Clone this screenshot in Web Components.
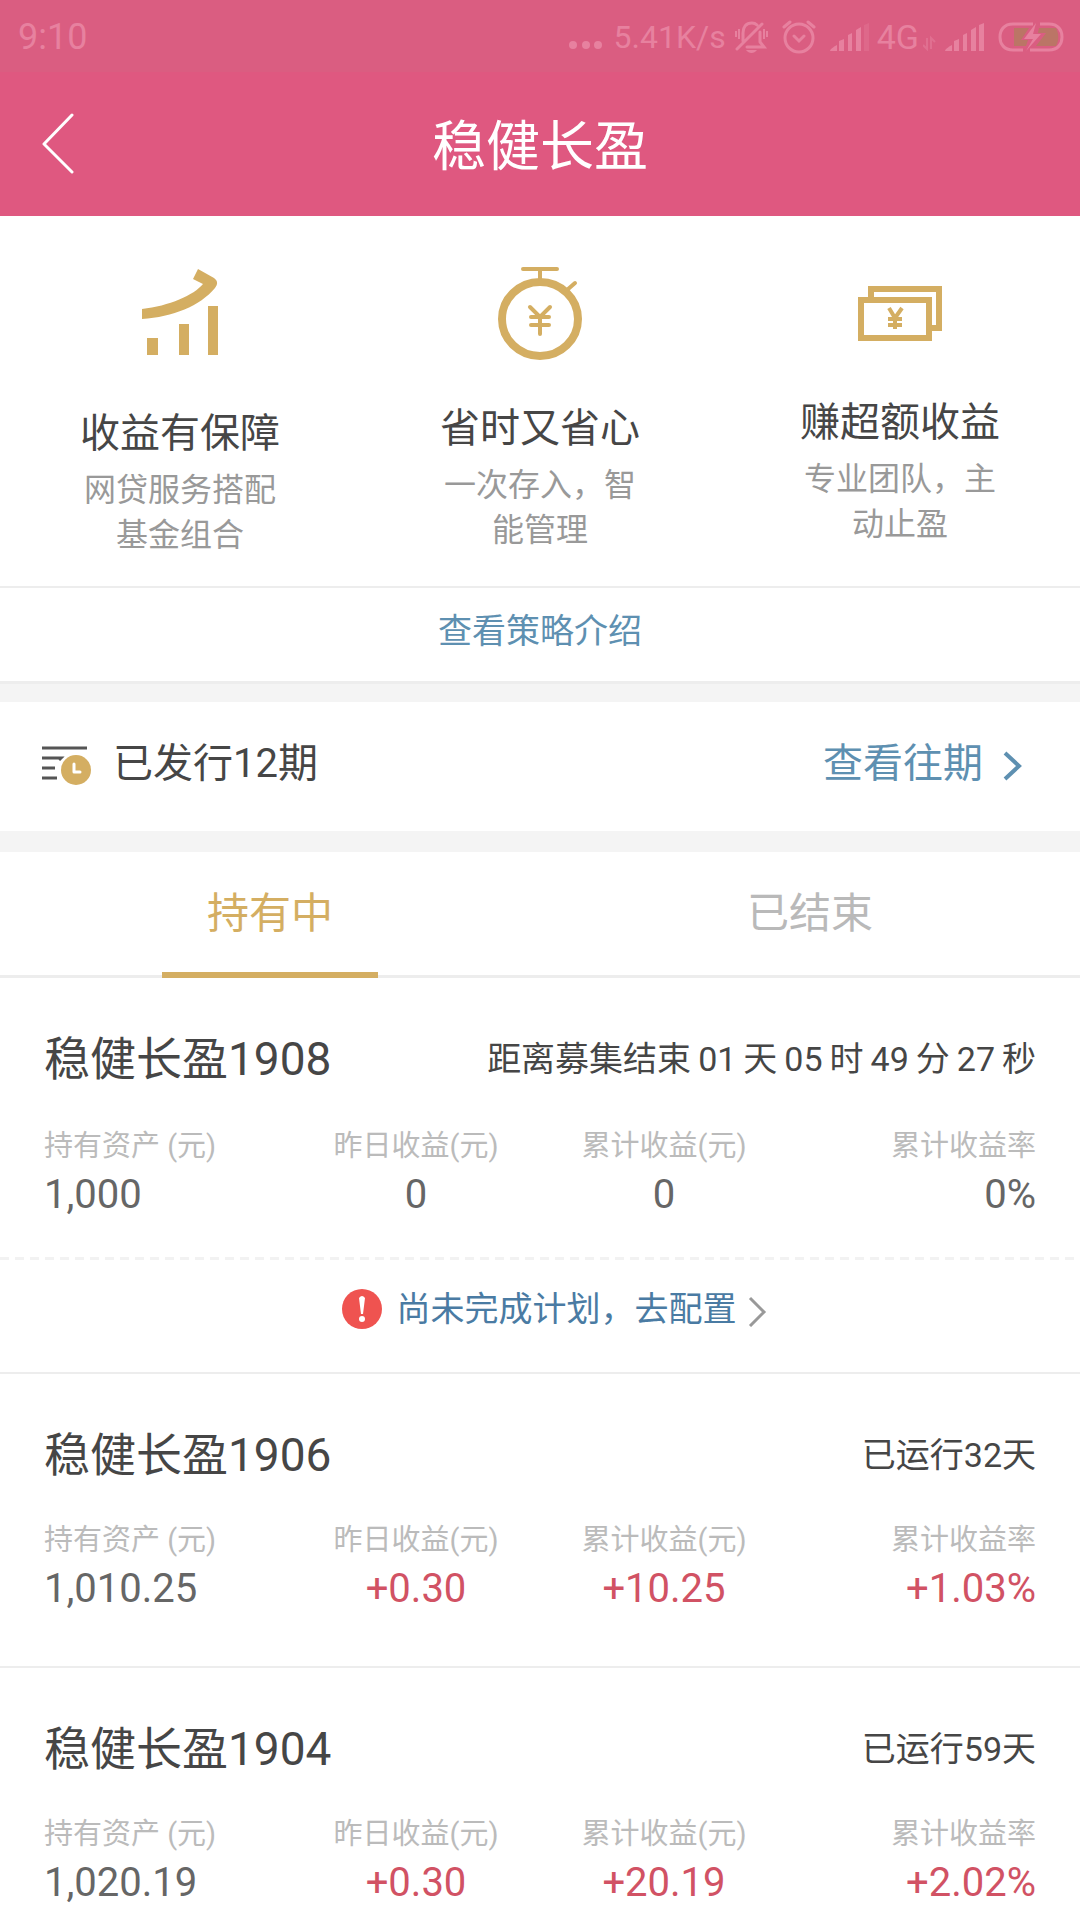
<!DOCTYPE html>
<html lang="zh-CN">
<head>
<meta charset="utf-8">
<meta name="viewport" content="width=device-width, initial-scale=1">
<title>稳健长盈</title>
<style>
  :root {
    --pink: #df5880;
    --gold: #d4ae62;
    --blue: #5e90b1;
    --text: #464646;
    --line: #ededed;
    --band: #f4f4f4;
  }

  body {
    margin: 0;
    height: 100vh;
    display: flex;
    flex-direction: column;
    background: #fff;
    color: var(--text);
    font-family: Roboto, "Noto Sans CJK SC", sans-serif;
    font-size: 34px;
    line-height: 48px;
  }

  main {
    flex: 1;
    min-height: 0;
    overflow-y: auto;
    scrollbar-width: none;
  }
</style>
</head>
<body>
  <status-bar></status-bar>
  <nav-header>稳健长盈</nav-header>

  <main>
    <feature-list>
      <feature-item icon="chart">
        <span slot="title">收益有保障</span>
        网贷服务搭配基金组合
      </feature-item>
      <feature-item icon="timer">
        <span slot="title">省时又省心</span>
        一次存入，智能管理
      </feature-item>
      <feature-item icon="notes">
        <span slot="title">赚超额收益</span>
        专业团队，主动止盈
      </feature-item>
    </feature-list>
    <strategy-link>查看策略介绍</strategy-link>
    <issue-row>
      已发行12期
      <span slot="more">查看往期</span>
    </issue-row>
    <tab-bar></tab-bar>
    <div id="plans"></div>
  </main>

<script>
function makeTemplate(html) {
  const tpl = document.createElement('template');
  tpl.innerHTML = html;
  return tpl;
}

class BaseElement extends HTMLElement {
  constructor() {
    super();
    this.attachShadow({ mode: 'open' }).appendChild(this.constructor.tpl.content.cloneNode(true));
  }
}

class StatusBar extends BaseElement {
  static tpl = makeTemplate(`
    <style>
      :host {
        display: flex;
        align-items: center;
        height: 72px;
        padding: 2px 16px 0 18px;
        box-sizing: border-box;
        background: #da5d81;
        color: #e7819f;
      }

      time { flex: 1; font-size: 36px; }
      svg { display: block; fill: currentColor; }
      .line { fill: none; stroke: currentColor; stroke-width: 3; }
      .thin { stroke-width: 2; }
      .speed { margin: 0 8px 0 12px; font-size: 32px; }
      .alarm { margin: 0 14px; }
      .net { margin: 0 4px 0 8px; }
      .battery { margin-left: 14px; }
    </style>

    <time>9:10</time>
    <svg width="34" height="30"><circle cx="5" cy="23" r="4"/><circle cx="18" cy="23" r="4"/><circle cx="30" cy="23" r="4"/></svg>
    <span class="speed">5.41K/s</span>
    <svg width="34" height="32" viewBox="0 0 34 32">
      <path class="line" stroke-linecap="round" d="M3 28 28 3M9 20V12C9 6 12 2 18 2c3 0 4 1 5 2M13 26h17l-4-5V11"/>
      <path class="line thin" d="M2 10v6M5 8v10M33 10v6M30 8v10"/>
      <path d="M12 29h11c-3 4-8 4-11 0z"/>
    </svg>
    <svg class="alarm" width="34" height="34" viewBox="0 0 34 34">
      <circle class="line" cx="17" cy="18" r="14"/>
      <path class="line" stroke-linecap="round" d="m12 16 5 5 5-5M2 7l6-5M32 7l-6-5"/>
    </svg>
    <svg width="39" height="28" viewBox="0 0 39 28">
      <path d="M0 28c0-2 5-5 7-6v6zM9 18l5-2v12H9zM18 12l4-2v18h-4zM26 7l5-3v24h-5z"/>
      <path opacity=".3" d="m34 2 5-2v28h-5z"/>
    </svg>
    <span class="net">4G</span>
    <svg width="22" height="28" viewBox="0 0 22 28" opacity=".5">
      <path class="line thin" d="M4 15v11L0 22M8 26V15l4 4"/>
    </svg>
    <svg width="39" height="28" viewBox="0 0 39 28">
      <path d="M0 28c0-2 5-5 7-6v6zM9 18l5-2v12H9zM18 12l4-2v18h-4zM26 7l5-3v24h-5zM34 2l5-2v28h-5z"/>
    </svg>
    <svg class="battery" width="66" height="30" viewBox="0 0 66 30">
      <path fill="#bb7566" d="M16 6h15L23 18h7l-2 6H16zM41 6h17c3 5 3 13 0 18H38l10-13h-8z"/>
      <path class="line" d="M35 2H15C6 2 2 8 2 15S6 28 15 28h10M42 2h9c9 0 13 6 13 13S60 28 51 28H32"/>
      <path d="M38 1 26 17h9l-7 12 15-17h-8z"/>
    </svg>
  `);
}

class NavHeader extends BaseElement {
  static tpl = makeTemplate(`
    <style>
      :host {
        display: grid;
        grid-template-columns: 120px 1fr 120px;
        align-items: center;
        height: 144px;
        background: var(--pink);
        color: #fff;
      }

      button {
        width: 116px;
        height: 144px;
        padding: 0;
        border: none;
        background: none;
        color: inherit;
        cursor: pointer;
      }

      svg { display: block; margin: 0 auto; }

      h1 {
        margin: 8px 0 0;
        text-align: center;
        font-size: 54px;
        font-weight: 400;
        line-height: 72px;
      }
    </style>

    <button aria-label="返回">
      <svg width="34" height="62" viewBox="0 0 34 62" fill="none" stroke="currentColor" stroke-width="3" stroke-linecap="round" stroke-linejoin="round"><path d="M31 2 3 31l28 28"/></svg>
    </button>
    <h1><slot></slot></h1>
  `);
}

class FeatureList extends BaseElement {
  static tpl = makeTemplate(`
    <style>
      :host {
        display: grid;
        grid-template-columns: repeat(3, 1fr);
        padding: 40px 0 28px;
        border-bottom: 2px solid var(--line);
      }
    </style>

    <slot></slot>
  `);
}

const featureIcons = {
  chart: `
    <svg width="84" height="124" viewBox="0 0 84 124" fill="#d4ae62">
      <path d="M4 53C31 50 56 39 65 28L55 23l5-10 16 9c4 3 4 6 1 10C62 50 35 61 4 63z"/>
      <path d="M9 82h11v17H9zM41 68h10v31H41zM70 50h10v49H70z"/>
    </svg>`,
  timer: `
    <svg width="84" height="119" viewBox="0 0 84 119" fill="none" stroke="#d4ae62" stroke-width="4" stroke-linecap="round">
      <ellipse cx="42" cy="63" rx="38" ry="37" stroke-width="8"/>
      <path d="M25 13h34M42 13v10M69 34l8-7M32 51l10 10 10-10M42 61v17M33 61h18M33 69h18"/>
    </svg>`,
  notes: `
    <svg width="84" height="113" viewBox="0 0 84 113" fill="none" stroke="#d4ae62" stroke-width="6">
      <path d="M13 42V33h68v39h-8"/>
      <path d="M3 44h68v38H3z"/>
      <path stroke-width="4" d="m31 52 6 10 7-10M37 62v11M30 63h14M30 69h14"/>
    </svg>`
};

class FeatureItem extends BaseElement {
  static tpl = makeTemplate(`
    <style>
      :host {
        display: flex;
        flex-direction: column;
        align-items: center;
      }

      #icon svg { display: block; }

      h2 {
        margin: 30px 0 10px;
        font-size: 40px;
        font-weight: 400;
        line-height: 48px;
      }

      p {
        margin: 0;
        width: 200px;
        color: #999;
        font-size: 32px;
        line-height: 45px;
        text-align: center;
      }
    </style>

    <div id="icon"></div>
    <h2><slot name="title"></slot></h2>
    <p><slot></slot></p>
  `);

  connectedCallback() {
    this.shadowRoot.getElementById('icon').innerHTML = featureIcons[this.getAttribute('icon')];
  }
}

class StrategyLink extends BaseElement {
  static tpl = makeTemplate(`
    <style>
      :host {
        display: block;
        border-bottom: 3px solid var(--line);
      }

      a {
        display: block;
        padding: 19px 0 26px;
        color: var(--blue);
        text-align: center;
        text-decoration: none;
      }
    </style>

    <a href="#strategy"><slot></slot></a>
  `);
}

class IssueRow extends BaseElement {
  static tpl = makeTemplate(`
    <style>
      :host {
        display: flex;
        align-items: center;
        padding: 38px 57px 43px 40px;
        border-top: 18px solid var(--band);
        border-bottom: 21px solid var(--band);
        font-size: 40px;
      }

      svg { display: block; }
      .label { flex: 1; margin-left: 21px; }

      a {
        display: flex;
        align-items: center;
        gap: 18px;
        color: var(--blue);
        text-decoration: none;
      }

      a svg { margin-top: 4px; }
    </style>

    <svg width="52" height="48" viewBox="0 0 52 48">
      <path d="M2 8h45M2 18h19l-2 2M2 28h13M2 38h15" fill="none" stroke="#555" stroke-width="3"/>
      <circle cx="36" cy="30" r="15" fill="#d4ae62"/>
      <path d="M34 24v8h6" fill="none" stroke="#fff" stroke-width="3" stroke-linecap="round" stroke-linejoin="round"/>
    </svg>
    <span class="label"><slot></slot></span>
    <a href="#history">
      <slot name="more"></slot>
      <svg width="22" height="30" viewBox="0 0 22 30" fill="none" stroke="currentColor" stroke-width="4"><path d="m4 2 14 13L4 28"/></svg>
    </a>
  `);
}

class TabBar extends BaseElement {
  static tpl = makeTemplate(`
    <style>
      :host {
        display: grid;
        grid-template-columns: 1fr 1fr;
        box-shadow: inset 0 -3px var(--line);
      }

      button {
        display: flex;
        flex-direction: column;
        align-items: center;
        padding: 38px 0 0;
        border: none;
        background: none;
        color: #b9b9b9;
        font: inherit;
        font-size: 42px;
        cursor: pointer;
      }

      button::after {
        content: '';
        width: 40%;
        height: 6px;
        margin-top: 34px;
      }

      button[aria-selected="true"] { color: var(--gold); }
      button[aria-selected="true"]::after { background: var(--gold); }
    </style>

    <button role="tab" aria-selected="true">持有中</button>
    <button role="tab" aria-selected="false">已结束</button>
  `);

  connectedCallback() {
    this.setAttribute('role', 'tablist');
    const tabs = this.shadowRoot.querySelectorAll('button');
    tabs.forEach(tab => {
      tab.onclick = () => tabs.forEach(t => t.setAttribute('aria-selected', t === tab));
    });
  }
}

class PlanCard extends BaseElement {
  static tpl = makeTemplate(`
    <style>
      :host {
        display: block;
        border-bottom: 2px solid var(--line);
      }

      article { padding: 51px 44px 53px; }
      article.pending { padding-bottom: 38px; }

      header {
        display: flex;
        align-items: center;
        justify-content: space-between;
        height: 60px;
        margin-bottom: 35px;
      }

      .pending header { margin-bottom: 37px; }

      h2 {
        margin: 0;
        font-size: 46px;
        font-weight: 400;
        line-height: 60px;
      }

      #state { display: flex; gap: 7px; }

      dl {
        display: grid;
        grid-template-columns: repeat(4, 1fr);
        margin: 0;
        text-align: center;
      }

      dl div:first-child { text-align: left; }
      dl div:last-child { text-align: right; }

      dt {
        margin-bottom: 5px;
        color: #bbb;
        font-size: 29px;
        line-height: 40px;
      }

      dd {
        margin: 0;
        color: #666;
        font-size: 40px;
      }

      .up { color: #d15264; }

      .notice {
        display: flex;
        align-items: center;
        justify-content: center;
        padding: 28px 0 39px 28px;
        background: repeating-linear-gradient(90deg, #f2f2f2 0 9px, transparent 9px 15px) top / 100% 3px no-repeat;
        color: #4a7ba3;
        text-decoration: none;
      }

      .notice svg { display: block; }
      .notice span { margin: 0 10px 0 15px; }
      .notice svg:last-child { margin-top: 4px; }
      [hidden] { display: none; }
    </style>

    <article>
      <header>
        <h2 id="name"></h2>
        <div id="state"></div>
      </header>
      <dl id="figures"></dl>
    </article>
    <a class="notice" href="#configure" hidden>
      <svg width="40" height="40" viewBox="0 0 40 40">
        <circle cx="20" cy="20" r="20" fill="#ef5350"/>
        <path d="M17 9q3-4 6 0l-2 16h-2z" fill="#fff"/>
        <circle cx="20" cy="30" r="3" fill="#fff"/>
      </svg>
      <span id="notice"></span>
      <svg width="20" height="32" viewBox="0 0 20 32" fill="none" stroke="#999" stroke-width="3"><path d="m3 3 14 14L3 31"/></svg>
    </a>
  `);

  set plan(p) {
    this.data = p;
    this.update();
  }

  update() {
    const p = this.data;
    if (!p) return;

    const root = this.shadowRoot;
    root.getElementById('name').textContent = p.name;
    root.getElementById('state').innerHTML = p.state.split(' ').map(s => `<span>${s}</span>`).join(' ');

    const labels = ['持有资产 (元)', '昨日收益(元)', '累计收益(元)', '累计收益率'];
    root.getElementById('figures').innerHTML = labels.map((label, i) => `
      <div>
        <dt>${label}</dt>
        <dd class="${p.figures[i].startsWith('+') ? 'up' : ''}">${p.figures[i]}</dd>
      </div>
    `).join('');

    if (p.notice) {
      root.querySelector('article').classList.add('pending');
      root.querySelector('.notice').hidden = false;
      root.getElementById('notice').textContent = p.notice;
    }
  }
}

customElements.define('status-bar', StatusBar);
customElements.define('nav-header', NavHeader);
customElements.define('feature-list', FeatureList);
customElements.define('feature-item', FeatureItem);
customElements.define('strategy-link', StrategyLink);
customElements.define('issue-row', IssueRow);
customElements.define('tab-bar', TabBar);
customElements.define('plan-card', PlanCard);

const plans = [
  {
    name: '稳健长盈1908',
    state: '距离募集结束 01 天 05 时 49 分 27 秒',
    figures: ['1,000', '0', '0', '0%'],
    notice: '尚未完成计划，去配置'
  },
  {
    name: '稳健长盈1906',
    state: '已运行32天',
    figures: ['1,010.25', '+0.30', '+10.25', '+1.03%']
  },
  {
    name: '稳健长盈1904',
    state: '已运行59天',
    figures: ['1,020.19', '+0.30', '+20.19', '+2.02%']
  }
];

plans.forEach(p => {
  const card = document.createElement('plan-card');
  card.plan = p;
  document.getElementById('plans').appendChild(card);
});
</script>
</body>
</html>
